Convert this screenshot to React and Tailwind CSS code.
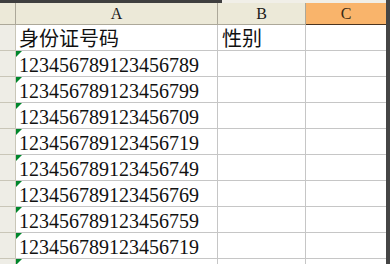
const rows = [
  { a: '身份证号码', b: '性别', flag: false },
  { a: '123456789123456789', b: '', flag: true },
  { a: '123456789123456799', b: '', flag: true },
  { a: '123456789123456709', b: '', flag: true },
  { a: '123456789123456719', b: '', flag: true },
  { a: '123456789123456749', b: '', flag: true },
  { a: '123456789123456769', b: '', flag: true },
  { a: '123456789123456759', b: '', flag: true },
  { a: '123456789123456719', b: '', flag: true },
  { a: '', b: '', flag: true },
]

const font = { fontFamily: '"Liberation Serif", "Noto Sans CJK SC", serif' }

const Flag = () => (
  <span className="absolute left-0 top-0 w-0 h-0 border-t-[6px] border-t-[#00862b] border-r-[6px] border-r-transparent" />
)

export default function App() {
  return (
    <div className="w-[390px] h-[264px] overflow-hidden bg-white flex" style={font}>
      <div className="w-[386px] flex flex-col">
        {/* top strip */}
        <div className="h-[3px] flex shrink-0">
          <div className="w-[222px] bg-[#3f3f3f]" />
          <div className="flex-1 bg-[#f1efe8]" />
        </div>

        {/* column headers */}
        <div className="h-[22px] flex shrink-0 text-[16px] text-[#1a1a1a]">
          <div className="w-[16px] bg-[#ece9d8] border-r border-b border-[#aca899]" />
          <div className="w-[202px] bg-[#ece9d8] border-r border-b border-[#aca899] flex items-center justify-center">A</div>
          <div className="w-[88px] bg-[#ece9d8] border-r border-b border-[#aca899] flex items-center justify-center">B</div>
          <div className="w-[80px] bg-[#f9b46b] border-b border-[#4a3420] flex items-center justify-center text-[#3a2a14]">C</div>
        </div>

        {rows.map((r, i) => (
          <div key={i} className="h-[26px] flex shrink-0 text-[20px] text-[#111]">
            <div className="w-[16px] bg-[#eeede6] border-r border-b border-[#c9c6b8]" />
            <div className="relative w-[202px] border-r border-b border-[#c6c6c6] flex items-center pl-[3px] pt-[2px] leading-none whitespace-nowrap">
              {r.flag && <Flag />}
              {r.a}
            </div>
            <div className="w-[88px] border-r border-b border-[#c6c6c6] flex items-center pl-[4px] pt-[2px] leading-none">
              {r.b}
            </div>
            <div className="w-[80px] border-b border-[#c6c6c6]" />
          </div>
        ))}
      </div>
      <div className="w-[4px] bg-[#454545]" />
    </div>
  )
}
